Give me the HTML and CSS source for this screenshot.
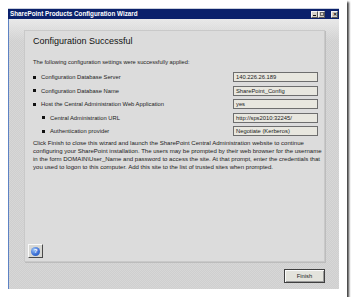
FILE: index.html
```html
<!DOCTYPE html>
<html>
<head>
<meta charset="utf-8">
<link rel="stylesheet" href="styles.css">
</head>
<body>
<div class="frame">
  <div class="window">
    <div class="titlebar">
      <span class="title">SharePoint Products Configuration Wizard</span>
      <div class="ctrls">
        <span class="cb min"><i></i></span>
        <span class="cb max"><i></i></span>
        <span class="cb close">&#x2715;</span>
      </div>
    </div>
    <div class="client">
      <div class="panel">
        <h1 class="heading">Configuration Successful</h1>
        <p class="intro">The following configuration settings were successfully applied:</p>
        <ul class="settings">
          <li class="row"><span class="label"><b class="dot"></b>Configuration Database Server</span><span class="val">140.226.26.189</span></li>
          <li class="row"><span class="label"><b class="dot"></b>Configuration Database Name</span><span class="val">SharePoint_Config</span></li>
          <li class="row"><span class="label"><b class="dot"></b>Host the Central Administration Web Application</span><span class="val">yes</span></li>
          <li class="row sub"><span class="label"><b class="dot"></b>Central Administration URL</span><span class="val">http://sps2010:32245/</span></li>
          <li class="row sub"><span class="label"><b class="dot"></b>Authentication provider</span><span class="val">Negotiate (Kerberos)</span></li>
        </ul>
        <p class="msg">Click Finish to close this wizard and launch the SharePoint Central Administration website to continue<br>configuring your SharePoint installation. The users may be prompted by their web browser for the username<br>in the form DOMAIN\User_Name and password to access the site. At that prompt, enter the credentials that<br>you used to logon to this computer. Add this site to the list of trusted sites when prompted.</p>
        <button class="help"><span class="qmark">?</span></button>
      </div>
      <div class="footer">
        <button class="finish">Finish</button>
      </div>
    </div>
  </div>
</div>
</body>
</html>
```

FILE: styles.css
```css
* { box-sizing: border-box; }
html, body { margin: 0; padding: 0; background: #ffffff; }
body { font-family: "Liberation Sans", Arial, sans-serif; color: #222; }

.frame {
  width: 347px;
  height: 297px;
  padding: 8px;
  background: #ffffff;
  box-shadow: 2px 2px 2px rgba(0,0,0,0.75);
}

.window {
  width: 331px;
  height: 281px;
  display: flex;
  flex-direction: column;
  border-top: 1px solid #c9cfdc;
}

.titlebar {
  height: 10px;
  background: #0b216b;
  display: flex;
  align-items: center;
  justify-content: space-between;
  padding: 0 1px 0 2px;
}
.title {
  color: #ffffff;
  font-weight: bold;
  font-size: 6.3px;
  line-height: 10px;
  white-space: nowrap;
}
.ctrls { display: flex; align-items: center; height: 10px; }
.cb {
  width: 7px;
  height: 7px;
  background: #d4d0c8;
  border: 1px solid;
  border-color: #f4f4f4 #555 #555 #f4f4f4;
  display: flex;
  align-items: center;
  justify-content: center;
}
.cb.max { margin-right: 6px; }
.cb.min i { display: block; width: 3px; height: 1px; background: #111; margin-top: 3px; margin-right: 1px; }
.cb.max i { display: block; width: 4px; height: 4px; border: 1px solid #666; }
.cb.close { font-size: 5px; line-height: 5px; color: #111; font-weight: bold; }

.client {
  flex: 1;
  border-left: 1px solid #5d82c4;
  padding: 11px 14px 0 15px;
  background:
    linear-gradient(180deg, rgba(240,240,240,0.75) 0, rgba(230,230,230,0) 22px),
    repeating-conic-gradient(#cfcfcf 0 25%, #d7d7d7 0 50%) 0 0 / 2px 2px;
  display: flex;
  flex-direction: column;
}

.panel {
  width: 301px;
  height: 232px;
  background: #dcdcdc;
  border: 1px solid #c9c9c9;
  box-shadow: 1px 1px 0 #bcbcbc;
  padding: 5px 0 3px 8px;
  display: flex;
  flex-direction: column;
}

.heading {
  margin: 0;
  font-weight: normal;
  font-size: 9px;
  line-height: 11px;
  color: #111;
}

.intro {
  margin: 11px 0 0 0;
  font-size: 5.7px;
  line-height: 8px;
}

.settings {
  list-style: none;
  margin: 6px 0 0 0;
  padding: 0;
  display: flex;
  flex-direction: column;
  gap: 3.5px;
}
.row {
  display: grid;
  grid-template-columns: 200px 85px;
  height: 10px;
  align-items: center;
  font-size: 5.8px;
}
.label { display: flex; align-items: center; gap: 5px; white-space: nowrap; }
.sub .label { padding-left: 9px; }
.dot { width: 3px; height: 3px; background: #111; display: block; }
.val {
  height: 10px;
  border: 1px solid #6e6e6e;
  background: #e8e7df;
  padding-left: 2px;
  line-height: 8px;
  white-space: nowrap;
  overflow: hidden;
}

.msg {
  margin: 3px 0 0 0;
  font-size: 6.05px;
  line-height: 8.1px;
  white-space: nowrap;
}

.help {
  margin-top: auto;
  margin-left: -5px;
  width: 15px;
  height: 14px;
  padding: 0;
  background: #d8d8d4;
  border: 1px solid;
  border-color: #fafafa #4a4a4a #4a4a4a #fafafa;
  display: flex;
  align-items: center;
  justify-content: center;
}
.qmark {
  width: 9px;
  height: 9px;
  border-radius: 50%;
  background: radial-gradient(circle at 35% 30%, #9cc0f4 0, #3f74d8 55%, #1f4fb0 100%);
  color: #fff;
  font-weight: bold;
  font-size: 6px;
  line-height: 9px;
  text-align: center;
  display: block;
}

.footer {
  margin-top: 7px;
  width: 301px;
  display: flex;
  justify-content: flex-end;
}
.finish {
  width: 41px;
  height: 14px;
  padding: 0;
  background: #e3e3dc;
  border: 1px solid #3f3f3f;
  box-shadow: inset 1px 1px 0 #fafafa, inset -1px -1px 0 #9a9a9a;
  font-family: "Liberation Sans", Arial, sans-serif;
  font-size: 5.8px;
  color: #222;
}
```
